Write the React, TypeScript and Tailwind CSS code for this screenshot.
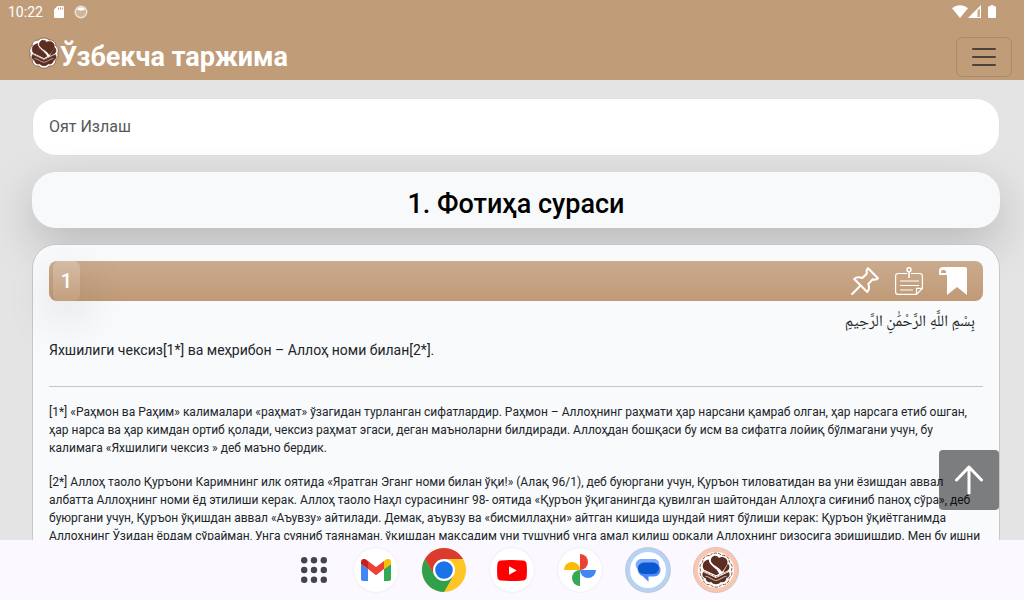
import React from "react";

function Rose({ className, outlined }: { className: string; outlined?: boolean }) {
  const petals =
    "M10.500 3.200C12.500.3 18.500.2 21 3c3.800-.6 7.200 2.200 6.800 6 2.400 1.600 3.200 4.800 1.800 7.200 1.200 2.400.4 5.500-2 7 .2 3.800-3 6.400-6.600 5.800-2.400 3-7.600 3-10 0-3.600.6-6.800-2-6.600-5.800-2.400-1.500-3.200-4.600-2-7C1 13.800 1.800 10.600 4.200 9 3.800 5.600 6.700 2.600 10.500 3.200z";
  return (
    <svg viewBox="0 0 32 32" className={className} aria-hidden="true">
      <path
        d={petals}
        fill="#fff"
        stroke={outlined ? "#6b463a" : "#8f6a58"}
        strokeWidth={outlined ? 0.8 : 1}
        strokeDasharray={outlined ? "3 1" : undefined}
      />
      <g fill="#5c2d20" stroke="#5c2d20" strokeWidth={outlined ? 0 : 0.8}>
        <path d="M12.300 4.800C14 2.500 17.300 3 18.600 5.300 20.800 3.700 25 4.500 26 7.700c.8 3-.9 5.500-4.700 9.900C19.500 13.700 14 12.500 11.800 8.800c-.7-1.400-.4-2.800.5-4z" />
        <path d="M9.600 6.700c-.3 5.200 7.500 7.500 9.200 12.600l-2.800 1.400-10.600-5C3 12.500 4.300 7.500 9.600 6.700z" />
        <path d="M26.500 10.500c2 1.700 1.700 4.500.3 5.700l-4.300 2.300c.6-3 3-4.500 4-8z" />
        <path d="M4.500 17.800L16 23.200l11.500-5.400c1.600 3-.3 5.200-2.400 5.600.3 2.500-2.300 4.300-5 3.300-1.500 2.600-6.700 2.600-8.200 0-2.700 1-5.300-.8-5-3.300-2.100-.4-4-2.600-2.400-5.600z" />
      </g>
      <path
        d="M6.500 21.500c3.500 0 6.500 3.800 9.500 3.800s6-3.800 9.500-3.800"
        fill="none"
        stroke="#fff"
        strokeWidth=".9"
        strokeOpacity=".6"
      />
      <path d="M5 17.200l11 4.800 11-4.800" fill="none" stroke="#8f6a58" strokeWidth=".7" strokeDasharray="2 1" />
    </svg>
  );
}

function StatusBar() {
  return (
    <div className="flex h-6 items-center justify-between pl-2 pr-7 text-white">
      <div className="flex items-center">
        <span className="text-sm leading-6">10:22</span>
        <svg viewBox="0 0 10 12" className="ml-[11px] h-3 w-[10px]" aria-hidden="true">
          <path d="M3.500 0H9a1 1 0 0 1 1 1v10a1 1 0 0 1-1 1H1a1 1 0 0 1-1-1V3.500z" fill="#fff" />
          <path d="M4.500 1.500v2M6.500 1.500v2M8.500 1.500v2" stroke="#c09c79" />
        </svg>
        <svg viewBox="0 0 14 14" className="ml-[10px] size-[14px]" aria-hidden="true">
          <circle cx="7" cy="7" r="5.700" fill="#d0b59b" stroke="#eadfd4" strokeWidth="1.600" />
          <path d="M3 4.500C4.500 1.500 9.500 1.500 11 4.500 9 6 5 6 3 4.500z" fill="#fff" />
        </svg>
      </div>
      <div className="flex items-center pb-[2px]">
        <svg viewBox="0 0 16 13" className="h-[13px] w-4" aria-hidden="true">
          <path d="M8 13L0 3.200C4.500-.8 11.500-.8 16 3.200z" fill="#fff" />
        </svg>
        <svg viewBox="0 0 13 13" className="h-[13px] w-[13px]" aria-hidden="true">
          <path d="M0 13L13 0v13z" fill="#fff" />
          <path d="M9.500 5.500l2.300-2.300V12H9.500z" fill="#c7a686" />
        </svg>
        <svg viewBox="0 0 8 13" className="ml-[7px] h-[13px] w-2" aria-hidden="true">
          <path d="M2.500 0h3v1.200H7a1 1 0 0 1 1 1V12a1 1 0 0 1-1 1H1a1 1 0 0 1-1-1V2.200a1 1 0 0 1 1-1h1.500z" fill="#fff" />
        </svg>
      </div>
    </div>
  );
}

function Header() {
  return (
    <header className="relative z-10 shrink-0 bg-[#c09c79]">
      <StatusBar />
      <nav className="flex h-14 items-center justify-between pl-7 pr-3 pt-[10px]">
        <a href="#top" className="flex items-center text-white">
          <Rose className="mb-2 size-8" />
          <span className="text-[27px] font-bold leading-10">Ўзбекча таржима</span>
        </a>
        <button aria-label="Меню" className="flex h-10 w-14 items-center justify-center rounded-md border border-[#a88a6c]">
          <svg viewBox="0 0 30 30" className="size-[30px]" aria-hidden="true">
            <path d="M4 7h22M4 15h22M4 23h22" stroke="#4c4239" strokeWidth="2" strokeLinecap="round" />
          </svg>
        </button>
      </nav>
    </header>
  );
}

const iconButton = "flex size-7 items-center justify-center";

function AyahBar() {
  return (
    <div className="flex h-10 items-center justify-between rounded-lg bg-linear-to-b from-[#caab8e] to-[#c09a77] pl-1 pr-4">
      <span className="flex h-10 w-[27px] items-center justify-center rounded-md bg-linear-to-b from-white/20 to-white/5 text-xl font-medium text-white shadow-[0_16px_48px_rgba(0,0,0,0.175)]">
        1
      </span>
      <div className="flex items-center gap-4">
        <button aria-label="Қадаш" className={iconButton}>
          <svg viewBox="0 0 28 28" className="size-7" fill="none" stroke="#fff" strokeWidth="2" strokeLinejoin="round" strokeLinecap="round" aria-hidden="true">
            <path d="M17 1.300L27 11.300C25.800 12.500 23.500 13 21.700 12.300L17.300 17C18.400 20 17.700 23.500 16.300 25L3.200 12C5 10.400 8.300 9.900 11.300 11L16 6.500C15.300 4.700 15.700 2.600 17 1.300z" />
            <path d="M9.500 18.500L1.200 27" />
          </svg>
        </button>
        <button aria-label="Эслатма" className={iconButton}>
          <svg viewBox="0 0 28 28" className="size-7" fill="none" stroke="#fff" strokeWidth="1.200" aria-hidden="true">
            <path d="M12 6.500H3A2.400 2.400 0 0 0 .6 9v16A2.400 2.400 0 0 0 3 27.400h18.500l5.900-6V9A2.400 2.400 0 0 0 25 6.500h-9M21.500 27v-5.600h5.700" />
            <circle cx="14" cy="2.700" r="2" strokeWidth="1.500" />
            <path d="M14 5v6" strokeWidth="1.600" />
            <path d="M5 14h19M5 18.500h19M5 23h13" />
          </svg>
        </button>
        <button aria-label="Хатчўп" className={iconButton}>
          <svg viewBox="0 0 28 28" className="size-7" aria-hidden="true">
            <path d="M4 0h22a2 2 0 0 1 2 2v26l-10-8-10 8V8H0V4a4 4 0 0 1 4-4z" fill="#fff" />
            <path d="M2 4.500C2 2.500 7 2.500 7 4.500V6H2z" fill="#c6a688" />
          </svg>
        </button>
      </div>
    </div>
  );
}

function Dock() {
  const round = "flex size-11 items-center justify-center rounded-full bg-white shadow-[0_0_2px_rgba(0,0,0,0.12)]";
  return (
    <nav aria-label="Иловалар" className="relative z-10 flex h-[60px] shrink-0 items-center justify-center gap-6 bg-[#fbf8ff]">
      <button aria-label="Барча иловалар" className="flex size-11 items-center justify-center">
        <svg viewBox="0 0 26 26" className="ml-3 size-[26px]" fill="#444450" aria-hidden="true">
          {[3.2, 13, 22.8].map((y) => [3.2, 13, 22.8].map((x) => <circle key={`${x}-${y}`} cx={x} cy={y} r="3.200" />))}
        </svg>
      </button>
      <button aria-label="Gmail" className={round}>
        <svg viewBox="0 0 30 22" className="h-[22px] w-[30px]" aria-hidden="true">
          <path d="M0 5l7 5v12H2a2 2 0 0 1-2-2z" fill="#4285f4" />
          <path d="M30 5l-7 5v12h5a2 2 0 0 0 2-2z" fill="#34a853" />
          <path d="M7 2l8 6 8-6v8l-8 6.200L7 10z" fill="#ea4335" />
          <path d="M0 5V3C0 .3 3-.9 5 .6L7 2v8L0 5z" fill="#c5221f" />
          <path d="M30 5V3c0-2.700-3-3.900-5-2.400L23 2v8l7-5z" fill="#fbbc04" />
        </svg>
      </button>
      <button aria-label="Chrome" className="size-11">
        <svg viewBox="0 0 44 44" className="size-11" aria-hidden="true">
          <circle cx="22" cy="22" r="22" fill="#ffc425" />
          <path d="M2.950 11A22 22 0 0 1 41.050 11H22l-9.530 16.500z" fill="#db3a2f" />
          <path d="M2.950 11A22 22 0 0 0 22 44l9.530-16.500H12.470z" fill="#30a04c" />
          <circle cx="22" cy="22" r="11" fill="#fff" />
          <circle cx="22" cy="22" r="8.800" fill="#1a73e8" />
        </svg>
      </button>
      <button aria-label="YouTube" className={round}>
        <svg viewBox="0 0 30 21" className="h-[21px] w-[30px]" aria-hidden="true">
          <path d="M4 .5Q15-.5 26 .5 29.300.8 29.600 4 30.300 10.500 29.600 17 29.300 20.200 26 20.500 15 21.500 4 20.500.7 20.200.4 17-.3 10.500.4 4 .7.8 4 .5z" fill="#f00" />
          <path d="M12 6.200l7.800 4.300-7.800 4.300z" fill="#fff" />
        </svg>
      </button>
      <button aria-label="Photos" className={round}>
        <svg viewBox="0 0 32 32" className="size-8" aria-hidden="true">
          <path d="M16 0a8 8 0 0 1 0 16z" fill="#ea4335" />
          <path d="M32 16a8 8 0 0 1-16 0z" fill="#4285f4" />
          <path d="M16 32a8 8 0 0 1 0-16z" fill="#34a853" />
          <path d="M0 16a8 8 0 0 1 16 0z" fill="#fbbc04" />
        </svg>
      </button>
      <button aria-label="Messages" className="flex size-11 items-center justify-center">
        <svg viewBox="0 0 46 46" className="size-[46px] shrink-0" aria-hidden="true">
          <circle cx="23" cy="23" r="22.300" fill="#b3d3fb" stroke="#c4c9d6" strokeWidth="1.200" />
          <circle cx="23" cy="23" r="18" fill="#fff" />
          <path d="M17 12h12c3.500 0 5.200 2.500 5.200 5v5H13c-2-1-2.300-3-2.300-4.500 0-3.500 2.800-5.500 6.300-5.500z" fill="#7faafc" />
          <path d="M12.500 21c0-2 1-3 3-3h15.500c3 0 4.500 2 4.500 5s-2.500 6.500-6.500 6.500h-5.500v5.200l-6-5.700c-3-1-5-4-5-8z" fill="#4d86fb" />
          <rect x="13" y="15.500" width="21" height="11.500" rx="5.700" fill="#0b57d0" />
        </svg>
      </button>
      <button aria-label="Ўзбекча таржима" className="flex size-11 items-center justify-center">
        <span className="flex size-[46px] shrink-0 items-center justify-center rounded-full border border-[#d2c5c5] bg-[#fbc5ae]">
          <span className="flex size-9 items-center justify-center rounded-full bg-white">
            <Rose className="size-9" outlined />
          </span>
        </span>
      </button>
    </nav>
  );
}

export default function App() {
  return (
    <div id="top" className="flex h-screen flex-col overflow-hidden bg-[#e4e4e4] font-['Roboto','Noto_Sans',sans-serif] text-[#212529]">
      <Header />
      <main className="relative min-h-0 flex-1 overflow-hidden pl-8 pr-6 pt-[18px]">
        <input
          type="search"
          aria-label="Оят Излаш"
          placeholder="Оят Излаш"
          className="block h-[58px] w-full rounded-3xl border border-[#dee2e6] bg-white px-4 pb-[2px] text-base outline-none placeholder:text-[#55595c]"
        />
        <h1 className="mt-4 flex h-14 items-center justify-center rounded-3xl bg-[#f8f9fa] pt-2 text-[27px] font-medium leading-8 text-black shadow-[0_16px_48px_rgba(0,0,0,0.2)]">
          1. Фотиҳа сураси
        </h1>
        <article className="relative mt-4 rounded-3xl border border-[#c6c8ca] bg-[#f8fafc] p-4">
          <AyahBar />
          <p dir="rtl" lang="ar" className="mt-[10px] px-2 font-['Noto_Naskh_Arabic','DejaVu_Sans',sans-serif] text-base leading-6">
            بِسْمِ اللَّهِ الرَّحْمَٰنِ الرَّحِيمِ
          </p>
          <p className="mt-[5px] text-sm leading-5">Яхшилиги чексиз[1*] ва меҳрибон – Аллоҳ номи билан[2*].</p>
          <hr className="mb-4 mt-[26px] border-[#c4c6c8]" />
          <p className="text-xs leading-[18px]">
            [1*] «Раҳмон ва Раҳим» калималари «раҳмат» ўзагидан турланган сифатлардир. Раҳмон – Аллоҳнинг раҳмати ҳар нарсани қамраб олган, ҳар нарсага етиб ошган, ҳар нарса ва ҳар кимдан ортиб қолади, чексиз раҳмат эгаси, деган маъноларни билдиради. Аллоҳдан бошқаси бу исм ва сифатга лойиқ бўлмагани учун, бу калимага «Яхшилиги чексиз » деб маъно бердик.
          </p>
          <p className="mt-4 text-xs leading-[18px]">
            [2*] Аллоҳ таоло Қуръони Каримнинг илк оятида «Яратган Эганг номи билан ўқи!» (Алақ 96/1), деб буюргани учун, Қуръон тиловатидан ва уни ёзишдан аввал албатта Аллоҳнинг номи ёд этилиши керак. Аллоҳ таоло Наҳл сурасининг 98- оятида «Қуръон ўқиганингда қувилган шайтондан Аллоҳга сиғиниб паноҳ сўра», деб буюргани учун, Қуръон ўқишдан аввал «Аъувзу» айтилади. Демак, аъувзу ва «бисмиллаҳни» айтган кишида шундай ният бўлиши керак: Қуръон ўқиётганимда Аллоҳнинг Ўзидан ёрдам сўрайман, Унга суяниб таянаман, ўқишдан мақсадим уни тушуниб унга амал қилиш орқали Аллоҳнинг ризосига эришишдир. Мен бу ишни
          </p>
        </article>
        <a href="#top" aria-label="Юқорига" className="absolute bottom-[30px] right-[25px] flex size-[60px] items-center justify-center rounded bg-black/50">
          <svg viewBox="0 0 28 30" className="h-[30px] w-7" fill="none" stroke="#fff" strokeWidth="3" strokeLinecap="round" strokeLinejoin="round" aria-hidden="true">
            <path d="M14 28V2M1.500 15L14 2l12.500 13" />
          </svg>
        </a>
      </main>
      <Dock />
    </div>
  );
}
